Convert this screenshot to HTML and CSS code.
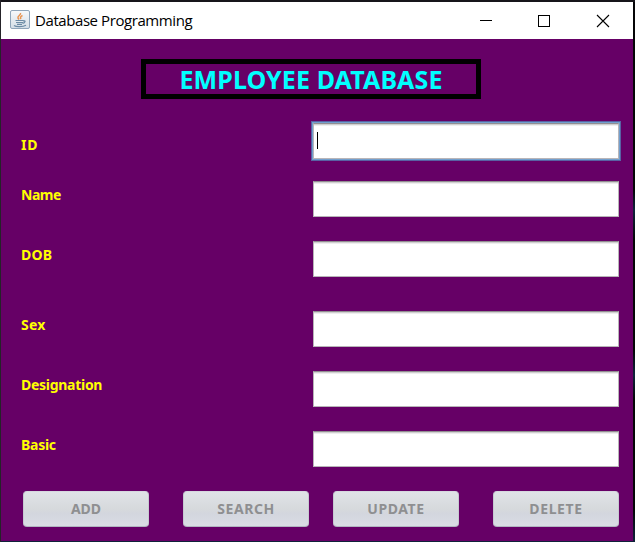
FILE: index.html
```html
<!DOCTYPE html>
<html lang="en">
<head>
<meta charset="utf-8">
<title>Database Programming</title>
<link rel="stylesheet" href="styles.css">
</head>
<body>
<div class="window">
  <header class="titlebar">
    <svg class="app-icon" width="20" height="20" viewBox="0 0 20 20">
      <defs><linearGradient id="tile" x1="0" y1="0" x2="0" y2="1"><stop offset="0" stop-color="#f7f9fa"/><stop offset="1" stop-color="#d3dde6"/></linearGradient></defs>
      <rect x=".5" y=".5" width="19" height="18" rx="1.5" fill="url(#tile)" stroke="#8fa5b9"/>
      <path d="M10.500 3c1 2-3.500 3-2.500 5l1 1.500M12.500 5.500c-2 1-2.500 2-1.500 3.500" fill="none" stroke="#e8934f" stroke-width="1.500"/>
      <path d="M5.500 10.500h8M6 12.500h7M7 14.300h5M13 11c3-1 2.500 2-.5 2.300M4 15.500c2 1.500 9 1.500 12-.3" fill="none" stroke="#6c8ba5" stroke-width="1.200"/>
    </svg>
    <span class="caption">Database Programming</span>
    <svg class="controls" width="132" height="14" viewBox="0 0 132 14" fill="none" stroke="#000" shape-rendering="crispEdges">
      <path d="M0 6.500h12M58.500 1.500h11v11h-11z"/>
      <path d="M117 1l12 12M129 1l-12 12" shape-rendering="auto" stroke-width="1.100"/>
    </svg>
  </header>
  <main class="panel">
    <h1 class="heading"><span>EMPLOYEE DATABASE</span></h1>
    <form class="form">
      <div class="row row-id"><span class="label">ID</span><div class="field focused"><i class="caret"></i></div></div>
      <div class="row"><span class="label name">Name</span><div class="field"></div></div>
      <div class="row"><span class="label dob">DOB</span><div class="field"></div></div>
      <div class="row row-sex"><span class="label sex">Sex</span><div class="field"></div></div>
      <div class="row"><span class="label">Designation</span><div class="field"></div></div>
      <div class="row"><span class="label">Basic</span><div class="field"></div></div>
    </form>
    <div class="actions">
      <button type="button" disabled>ADD</button>
      <button type="button" disabled>SEARCH</button>
      <button type="button" disabled>UPDATE</button>
      <button type="button" disabled>DELETE</button>
    </div>
  </main>
</div>
</body>
</html>
```
FILE: styles.css
```css
* { box-sizing: border-box; }
body {
  margin: 0;
  height: 542px;
  overflow: hidden;
  padding: 2px 1px 0;
  background: linear-gradient(90deg, #252329 0 1px, transparent 1px), linear-gradient(#17151a 0 2px, transparent 2px), linear-gradient(#050507 0 190px, #10223c 210px, #050507 240px 350px, #10223c 375px, #050507 400px 510px, #10223c);
  font-family: "Noto Sans", sans-serif;
}
.window { width: 632px; height: 539px; }
.titlebar {
  display: flex;
  align-items: center;
  height: 37px;
  padding: 0 21px 0 9px;
  background: #fff;
}
.app-icon { margin-top: -1px; }
.caption {
  margin: -2px 0 0 5px;
  font-family: "Open Sans", sans-serif;
  font-size: 15px;
  line-height: 20px;
  letter-spacing: -0.42px;
  white-space: nowrap;
  color: #000;
}
.controls { margin-left: auto; }
.panel {
  height: 502px;
  padding: 20px 14px 0 20px;
  background: #660066;
}
.heading {
  display: flex;
  justify-content: center;
  align-items: center;
  width: 340px;
  height: 40px;
  margin: 0 0 24px 120px;
  border: 5px solid #000;
  color: #0ff;
  font-size: 25px;
  line-height: 30px;
  font-weight: 700;
  letter-spacing: 0.1px;
  white-space: nowrap;
}
.form { display: grid; row-gap: 24px; margin: 0; }
.row {
  display: grid;
  grid-template-columns: 292px 306px;
  height: 36px;
}
.row-id { margin-bottom: -2px; }
.row-sex { margin-top: 10px; }
.label {
  padding-top: 4px;
  color: #ff0;
  font-size: 14px;
  line-height: 20px;
  font-weight: 700;
  letter-spacing: -0.28px;
}
.name { letter-spacing: -0.5px; }
.dob { letter-spacing: 0.2px; }
.sex { letter-spacing: 0.2px; }
.row-id .label { padding-top: 12px; letter-spacing: 0.9px; }
.field {
  padding: 8px 3px;
  border: 1px solid #b8b5b8;
  border-top-color: #918e91;
  background: #fff;
  box-shadow: inset 0 1px #d0d0d0, inset 0 2px #eee;
}
.focused { box-shadow: inset 0 1px #d0d0d0, inset 0 2px #eee, 0 0 0 1px #729fcf, 0 0 0 2px #5962a3; }
.caret { display: block; width: 1px; height: 17px; background: #000; }
.actions {
  display: grid;
  grid-template-columns: 160px 150px 160px 126px;
  margin: 24px 0 0 2px;
}
.actions button {
  width: 126px;
  height: 36px;
  padding: 0;
  border: 1px solid #c5c9d0;
  border-top-color: #d6d8df;
  border-bottom-color: #b1b5c0;
  border-radius: 4px;
  background: linear-gradient(#e0e3e7, #d6d9dc 50%, #d3d6de 65%, #dadde4);
  color: #8e8f91;
  font: 700 14px/20px "Noto Sans", sans-serif;
  letter-spacing: 0.6px;
}
.actions button:first-child { letter-spacing: 0; }
```
